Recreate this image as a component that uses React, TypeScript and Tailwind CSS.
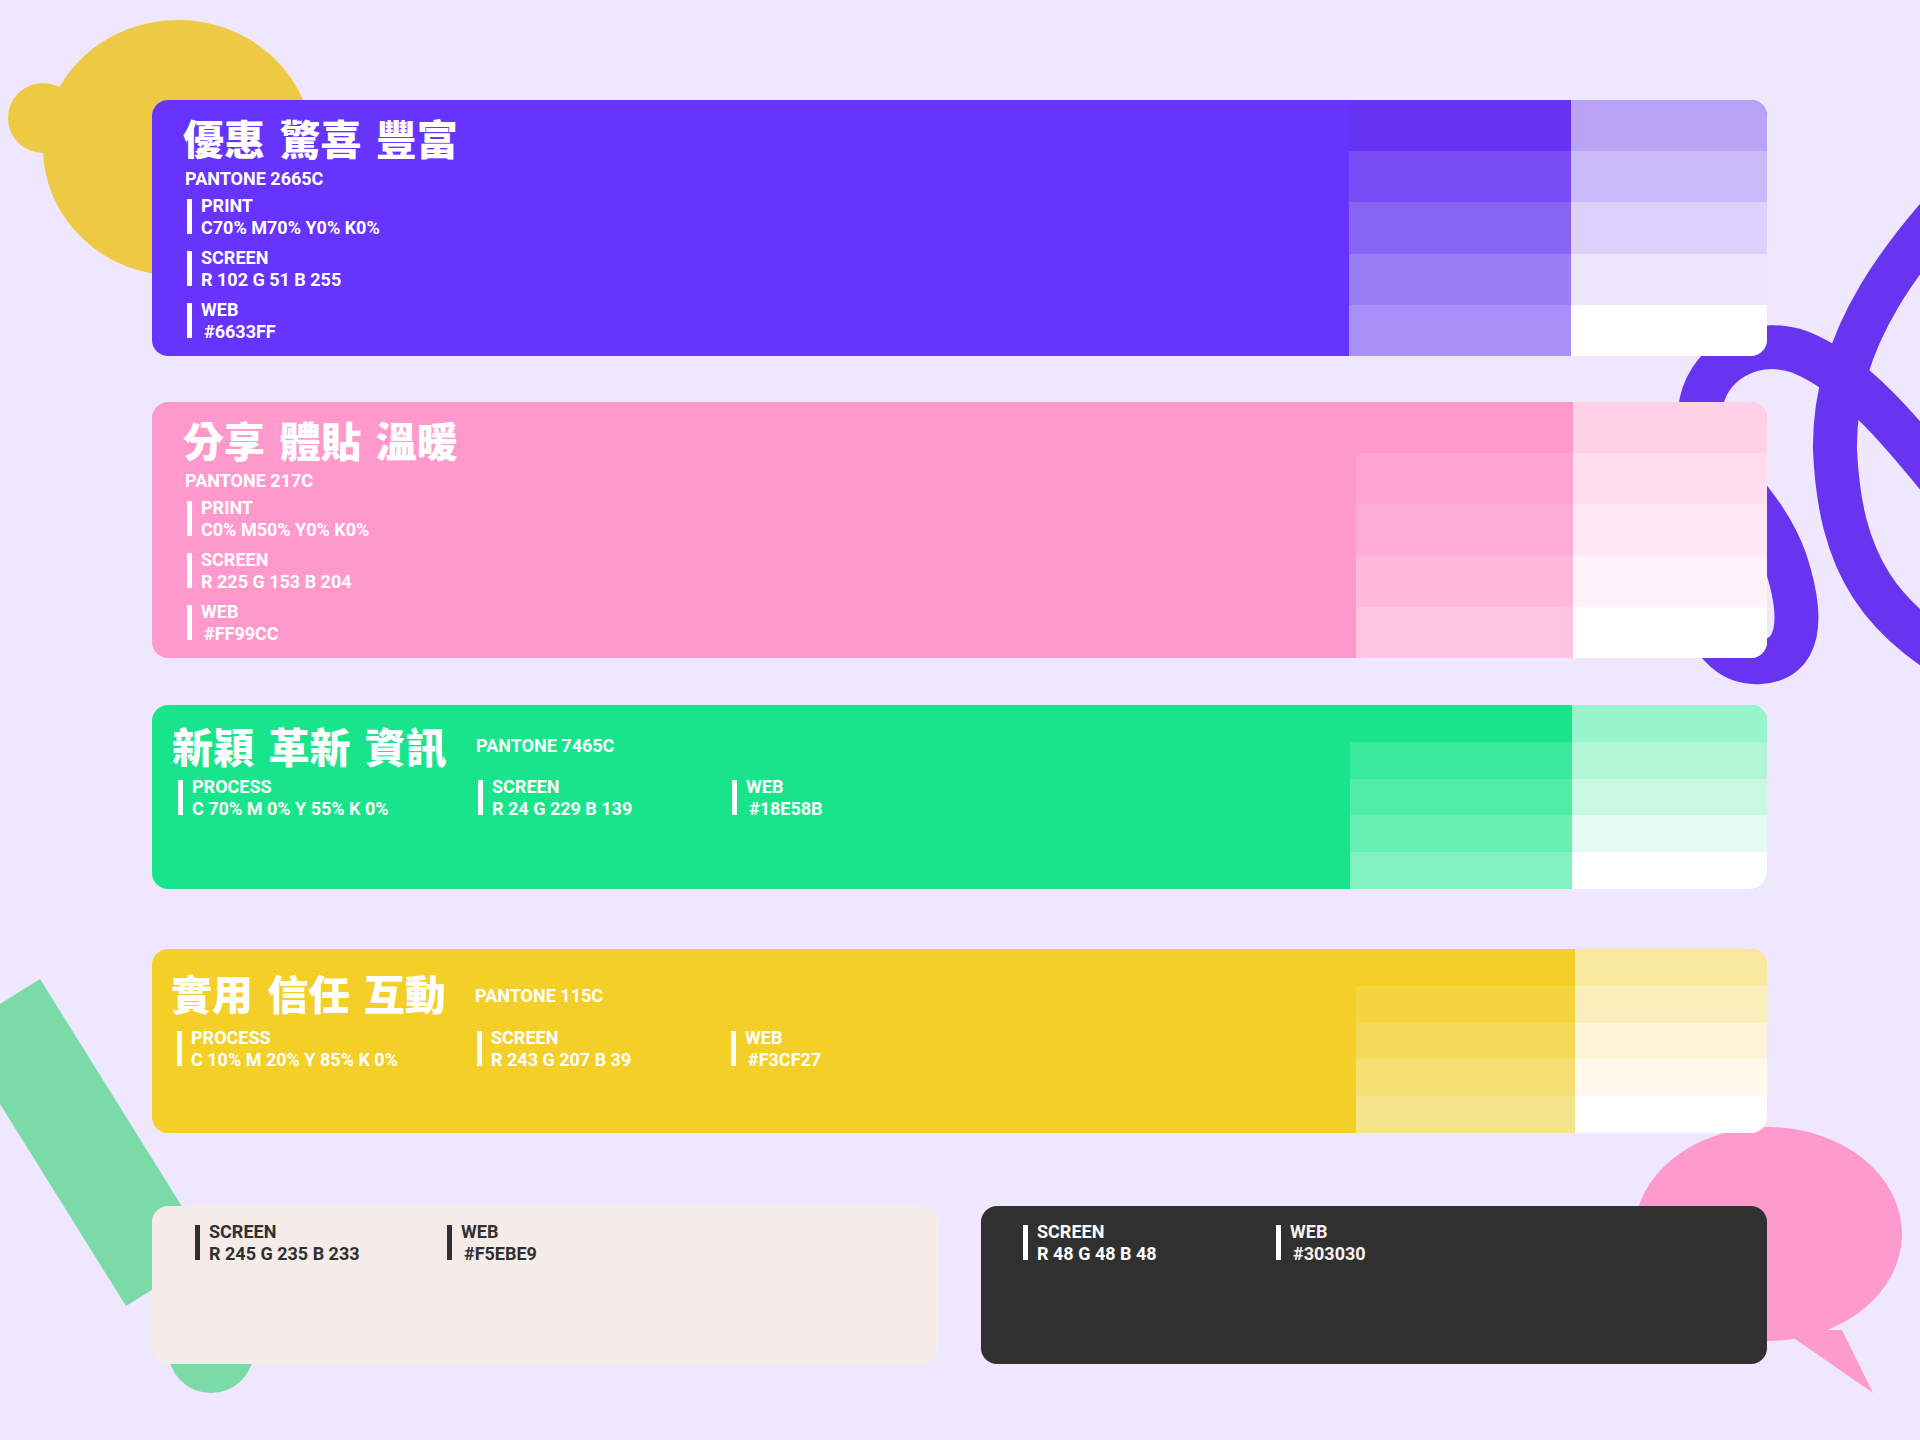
import React from "react";

const LATIN = "font-['Roboto','Noto_Sans_CJK_TC',sans-serif]";
const CJK = "font-['Noto_Sans_CJK_TC','Noto_Sans_CJK_JP',sans-serif]";

type Info = { label: string; value: string; web?: boolean };

function Row({ label, value, web, bar, text }: Info & { bar: string; text: string }) {
  return (
    <div className="flex">
      <div className={`mt-[4px] mb-[5px] w-[5px] shrink-0 ${bar}`} />
      <div className={`${LATIN} ml-[9px] text-[18px] font-bold leading-[22px] ${text}`}>
        <div>{label}</div>
        <div className={web ? "pl-[3px]" : ""}>{value}</div>
      </div>
    </div>
  );
}

function Swatches({ col1, col2, w1, w2 }: { col1: string[]; col2: string[]; w1: string; w2: string }) {
  return (
    <>
      <div className={`flex flex-col ${w1}`}>
        {col1.map((c, i) => (
          <div key={i} className={`flex-1 ${c}`} />
        ))}
      </div>
      <div className={`flex flex-col ${w2}`}>
        {col2.map((c, i) => (
          <div key={i} className={`flex-1 ${c}`} />
        ))}
      </div>
    </>
  );
}

function VerticalCard({
  bg,
  title,
  pantone,
  rows,
  col1,
  col2,
  w1,
  w2,
}: {
  bg: string;
  title: string;
  pantone: string;
  rows: Info[];
  col1: string[];
  col2: string[];
  w1: string;
  w2: string;
}) {
  return (
    <div className={`flex h-[256px] w-[1615px] overflow-hidden rounded-[16px] ${bg}`}>
      <div className="flex-1 pl-[31px] pt-[16px]">
        <div className={`${CJK} text-[41px] font-black leading-[42px] text-white [word-spacing:5px]`}>{title}</div>
        <div className={`${LATIN} ml-[2px] mt-[10px] text-[18px] font-bold leading-[22px] text-white`}>{pantone}</div>
        <div className="ml-[4px] mt-[5px] flex flex-col gap-[8px]">
          {rows.map((r) => (
            <Row key={r.label} {...r} bar="bg-white" text="text-white" />
          ))}
        </div>
      </div>
      <Swatches col1={col1} col2={col2} w1={w1} w2={w2} />
    </div>
  );
}

function HorizontalCard({
  bg,
  title,
  pantone,
  rows,
  col1,
  col2,
  w1,
  w2,
  pad,
  rowsMt,
  pantoneShift,
}: {
  bg: string;
  title: string;
  pantone: string;
  rows: Info[];
  col1: string[];
  col2: string[];
  w1: string;
  w2: string;
  pad: string;
  rowsMt: string;
  pantoneShift: string;
}) {
  return (
    <div className={`flex h-[184px] w-[1615px] overflow-hidden rounded-[16px] ${bg}`}>
      <div className={`flex-1 ${pad}`}>
        <div className="flex items-center">
          <div className={`${CJK} w-[304px] text-[41px] font-black leading-[42px] text-white [word-spacing:5px]`}>{title}</div>
          <div className={`${LATIN} text-[18px] font-bold leading-[22px] text-white ${pantoneShift}`}>{pantone}</div>
        </div>
        <div className={`ml-[6px] grid grid-cols-[300px_254px_auto] ${rowsMt}`}>
          {rows.map((r) => (
            <Row key={r.label} {...r} bar="bg-white" text="text-white" />
          ))}
        </div>
      </div>
      <Swatches col1={col1} col2={col2} w1={w1} w2={w2} />
    </div>
  );
}

function Decorations() {
  return (
    <svg className="absolute left-0 top-0" width="1920" height="1440" viewBox="0 0 1920 1440">
      {/* yellow blob */}
      <ellipse cx="178" cy="148" rx="135" ry="128" fill="#EEC944" />
      <circle cx="43" cy="118" r="35" fill="#EEC944" />
      {/* purple squiggle */}
      <path
        d="M 2000 150 C 1900 250, 1833 340, 1835 450 C 1840 560, 1875 625, 1990 680"
        fill="none"
        stroke="#6834F0"
        strokeWidth="44"
      />
      <path
        d="M 1990 540 C 1930 470, 1870 380, 1800 352 C 1750 335, 1705 365, 1700 410 C 1697 460, 1760 490, 1785 560 C 1805 620, 1800 660, 1760 662 C 1732 664, 1714 645, 1700 612"
        fill="none"
        stroke="#6834F0"
        strokeWidth="44"
      />
      {/* green stripe */}
      <polygon points="40,979 -45,1032 126,1306 211,1253" fill="#7BDBA8" />
      <circle cx="211" cy="1350" r="43" fill="#7BDBA8" />
      {/* pink speech bubble */}
      <ellipse cx="1768" cy="1234" rx="134" ry="107" fill="#FF9BCC" />
      <polygon points="1782,1330 1873,1393 1842,1330" fill="#FF9BCC" />
    </svg>
  );
}

export default function App() {
  return (
    <div className="relative h-[1440px] w-[1920px] overflow-hidden bg-[#EFE7FE]">
      <Decorations />
      <div className="relative z-10 flex flex-col pl-[152px] pt-[100px]">
        <VerticalCard
          bg="bg-[#6633FF]"
          title="優惠 驚喜 豐富"
          pantone="PANTONE 2665C"
          rows={[
            { label: "PRINT", value: "C70% M70% Y0% K0%" },
            { label: "SCREEN", value: "R 102 G 51 B 255" },
            { label: "WEB", value: "#6633FF", web: true },
          ]}
          w1="w-[222px]"
          w2="w-[196px]"
          col1={["bg-[#6633F2]", "bg-[#784DF4]", "bg-[#8864F3]", "bg-[#9A7CF7]", "bg-[#A98FF8]"]}
          col2={["bg-[#B9A3F7]", "bg-[#CABBF8]", "bg-[#DDD1FB]", "bg-[#ECE6FD]", "bg-[#FFFFFF]"]}
        />
        <div className="mt-[46px]">
          <VerticalCard
            bg="bg-[#FF99CC]"
            title="分享 體貼 溫暖"
            pantone="PANTONE 217C"
            rows={[
              { label: "PRINT", value: "C0% M50% Y0% K0%" },
              { label: "SCREEN", value: "R 225 G 153 B 204" },
              { label: "WEB", value: "#FF99CC", web: true },
            ]}
            w1="w-[217px]"
            w2="w-[194px]"
            col1={["bg-[#FF99CC]", "bg-[#FFA3D2]", "bg-[#FFADD7]", "bg-[#FFB8DC]", "bg-[#FFC4E2]"]}
            col2={["bg-[#FFD1E7]", "bg-[#FFDCEE]", "bg-[#FFE7F3]", "bg-[#FFF3F9]", "bg-[#FFFFFF]"]}
          />
        </div>
        <div className="mt-[47px]">
          <HorizontalCard
            bg="bg-[#18E58B]"
            title="新穎 革新 資訊"
            pantone="PANTONE 7465C"
            pad="pl-[20px] pt-[19px]"
            rowsMt="mt-[10px]"
            pantoneShift="mt-[1px]"
            rows={[
              { label: "PROCESS", value: "C 70% M 0% Y 55% K 0%" },
              { label: "SCREEN", value: "R 24 G 229 B 139" },
              { label: "WEB", value: "#18E58B", web: true },
            ]}
            w1="w-[222px]"
            w2="w-[195px]"
            col1={["bg-[#18E58B]", "bg-[#37EA9B]", "bg-[#4FEDA6]", "bg-[#67F0B3]", "bg-[#81F3C0]"]}
            col2={["bg-[#98F4CA]", "bg-[#B2F6D6]", "bg-[#CBF8E3]", "bg-[#E3FBF1]", "bg-[#FFFFFF]"]}
          />
        </div>
        <div className="mt-[60px]">
          <HorizontalCard
            bg="bg-[#F3CF27]"
            title="實用 信任 互動"
            pantone="PANTONE 115C"
            pad="pl-[19px] pt-[22px]"
            rowsMt="mt-[14px]"
            pantoneShift="mt-[7px]"
            rows={[
              { label: "PROCESS", value: "C 10% M 20% Y 85% K 0%" },
              { label: "SCREEN", value: "R 243 G 207 B 39" },
              { label: "WEB", value: "#F3CF27", web: true },
            ]}
            w1="w-[219px]"
            w2="w-[192px]"
            col1={["bg-[#F3CF27]", "bg-[#F4D540]", "bg-[#F5DA59]", "bg-[#F5DF72]", "bg-[#F6E48A]"]}
            col2={["bg-[#F9E99E]", "bg-[#FAEFBB]", "bg-[#FCF4D4]", "bg-[#FEF9EA]", "bg-[#FFFFFF]"]}
          />
        </div>
        <div className="mt-[73px] flex gap-[43px]">
          <div className="h-[158px] w-[786px] rounded-[16px] bg-[#F5EBE9] pl-[43px] pt-[15px]">
            <div className="grid grid-cols-[252px_auto]">
              <Row label="SCREEN" value="R 245 G 235 B 233" bar="bg-[#303030]" text="text-[#303030]" />
              <Row label="WEB" value="#F5EBE9" web bar="bg-[#303030]" text="text-[#303030]" />
            </div>
          </div>
          <div className="h-[158px] w-[786px] rounded-[16px] bg-[#303030] pl-[42px] pt-[15px]">
            <div className="grid grid-cols-[253px_auto]">
              <Row label="SCREEN" value="R 48 G 48 B 48" bar="bg-white" text="text-white" />
              <Row label="WEB" value="#303030" web bar="bg-white" text="text-[#F8F1F0]" />
            </div>
          </div>
        </div>
      </div>
    </div>
  );
}
